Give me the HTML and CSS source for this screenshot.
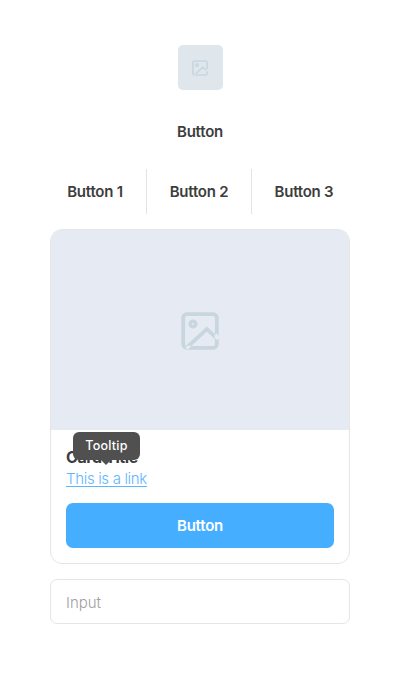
FILE: index.html
```html
<!DOCTYPE html>
<html lang="en">
<head>
<meta charset="utf-8">
<title>Components</title>
<link rel="stylesheet" href="styles.css">
</head>
<body>
<svg class="defs" aria-hidden="true">
  <symbol id="image" viewBox="0 0 38 38">
    <g fill="none" stroke="currentColor" stroke-width="3.800">
      <rect x="2.200" y="2.200" width="33.600" height="33.600" rx="3.500"/>
      <path d="M7 34.500L25.800 17L35 25.500"/>
      <circle cx="12" cy="12" r="2.800" stroke-width="3.600"/>
    </g>
    <path class="notch" d="M33.600 23l2 -1.500L38 24v2.500l-2 1.500-2.400-2zM4.500 36l2-2.200h4.200l-2 2.200-2.500 1.500z"/>
  </symbol>
</svg>
<main class="page">
  <div class="thumb"><svg class="thumb-icon"><use href="#image"/></svg></div>
  <button class="button">Button</button>
  <div class="group">
    <button class="button">Button 1</button>
    <button class="button">Button 2</button>
    <button class="button">Button 3</button>
  </div>
  <section class="card">
    <div class="media"><svg class="media-icon"><use href="#image"/></svg></div>
    <div class="body">
      <div class="heading">
        <h2 class="title">Card Title</h2>
        <div class="tooltip">Tooltip</div>
      </div>
      <a class="link" href="#">This is a link</a>
      <button class="button primary">Button</button>
    </div>
  </section>
  <input class="input" type="text" placeholder="Input">
</main>
</body>
</html>
```
FILE: styles.css
```css
* { box-sizing: border-box; }
body {
  margin: 0;
  background: #fff;
  color: #3d3d3d;
  font: 15px/22px Inter, sans-serif;
}
.defs { display: none; }
.page {
  display: flex;
  flex-direction: column;
  align-items: center;
  width: 300px;
  margin: 0 auto;
  padding-top: 45px;
}
.thumb {
  --surface: #dfe7ed;
  display: flex;
  align-items: center;
  justify-content: center;
  width: 45px;
  height: 45px;
  margin-bottom: 19px;
  border-radius: 5px;
  background: var(--surface);
  color: #c9d5df;
}
.thumb-icon { width: 16px; height: 16px; }
.notch { fill: var(--surface); }
.button {
  height: 45px;
  padding: 0;
  border: 0;
  background: none;
  color: #3d3d3d;
  font: 600 15px/22px Inter, sans-serif;
  letter-spacing: -0.23px;
}
.group {
  display: grid;
  grid-template-columns: 102px 105px 105px;
  margin-top: 15px;
}
.group .button + .button { border-left: 1px solid #dfe5ea; }
.card {
  width: 300px;
  height: 335px;
  margin: 15px 0;
  border: 1px solid #e5e5e5;
  border-radius: 12px;
  overflow: hidden;
}
.media {
  --surface: #e6ebf3;
  display: flex;
  align-items: center;
  justify-content: center;
  height: 200px;
  padding-top: 1px;
  background: var(--surface);
  color: #c9d5df;
}
.media-icon { width: 38px; height: 38px; }
.body { padding: 16px 15px; }
.heading { position: relative; }
.title {
  margin: 0;
  padding-top: 1px;
  font-size: 16px;
  font-weight: 700;
  line-height: 21px;
  letter-spacing: -0.4px;
}
.tooltip {
  position: absolute;
  left: 7px;
  top: -14px;
  width: 67px;
  height: 28px;
  border-radius: 6px;
  background: #505050;
  color: #fff;
  font-size: 12.5px;
  font-weight: 500;
  line-height: 28px;
  letter-spacing: 0.25px;
  text-align: center;
}
.tooltip::after {
  content: "";
  position: absolute;
  left: 28px;
  bottom: -5px;
  border: 5px solid transparent;
  border-top-color: #505050;
  border-bottom: 0;
}
.link {
  display: block;
  width: fit-content;
  color: #5cb6ff;
  font-weight: 300;
  letter-spacing: -0.33px;
  text-underline-offset: 2px;
}
.primary {
  display: block;
  width: 268px;
  margin-top: 13px;
  border-radius: 7px;
  background: #45aeff;
  color: #fff;
}
.input {
  width: 300px;
  height: 45px;
  padding: 2px 15px 0;
  border: 1px solid #e5e5e5;
  border-radius: 7px;
  font: 300 15px/22px Inter, sans-serif;
}
.input::placeholder { color: #a0a0a0; }
```
